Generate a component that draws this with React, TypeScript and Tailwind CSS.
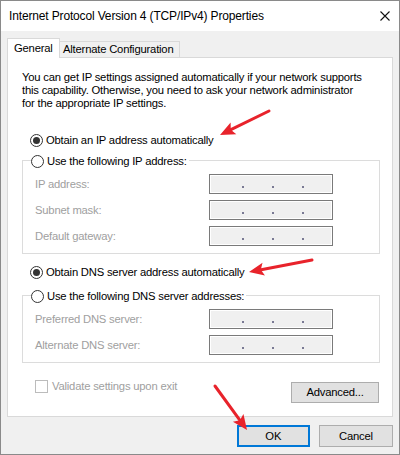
import React from 'react';

const font = { fontFamily: '"Liberation Sans", Arial, sans-serif' };

// little red annotation arrow: tail -> tip
function Arrow({ x1, y1, x2, y2 }: { x1: number; y1: number; x2: number; y2: number }) {
  const dx = x2 - x1;
  const dy = y2 - y1;
  const len = Math.sqrt(dx * dx + dy * dy);
  const ux = dx / len;
  const uy = dy / len;
  const headLen = 15;
  const headW = 6.5;
  const bx = x2 - ux * headLen;
  const by = y2 - uy * headLen;
  const pts = `${x2},${y2} ${bx - uy * headW},${by + ux * headW} ${bx + ux * 3},${by + uy * 3} ${bx + uy * headW},${by - ux * headW}`;
  return (
    <g>
      <line x1={x1} y1={y1} x2={bx + ux * 4} y2={by + uy * 4} stroke="#e8232b" strokeWidth={3} strokeLinecap="round" />
      <polygon points={pts} fill="#e8232b" />
    </g>
  );
}

function Radio({ checked, label }: { checked?: boolean; label: string }) {
  return (
    <div className="flex items-center gap-[3px] bg-white pr-[2px] w-fit">
      <span className="flex items-center justify-center w-[13px] h-[13px] rounded-full border border-[#333] bg-white">
        {checked && <span className="w-[7px] h-[7px] rounded-full bg-[#333]" />}
      </span>
      <span className="text-[11.25px] tracking-[-0.2px] leading-[13px] text-black whitespace-nowrap">{label}</span>
    </div>
  );
}

function IpBox() {
  return (
    <div className="w-[124px] h-[20px] border border-[#7a7a7a] bg-[#f0f0f0] shadow-[inset_0_0_0_1px_#ffffff] relative">
      <span className="absolute left-[32px] top-[11px] w-[2px] h-[2px] bg-[#7a7a94]" />
      <span className="absolute left-[62px] top-[11px] w-[2px] h-[2px] bg-[#7a7a94]" />
      <span className="absolute left-[92px] top-[11px] w-[2px] h-[2px] bg-[#7a7a94]" />
    </div>
  );
}

function FieldRow({ label }: { label: string }) {
  return (
    <div className="flex items-center justify-between h-[20px]">
      <span className="text-[11.25px] tracking-[-0.2px] text-[#a0a0a0]">{label}</span>
      <IpBox />
    </div>
  );
}

function Group({ legend, rows }: { legend: string; rows: string[] }) {
  return (
    <div className="ml-[14px] mr-[12px] border border-[#dcdcdc] px-[12px] pb-[7px]">
      <div className="-mt-[6px] -ml-[4px] mb-[6px]">
        <Radio label={legend} />
      </div>
      <div className="flex flex-col gap-[6px] pr-[34px]">
        {rows.map((r) => (
          <FieldRow key={r} label={r} />
        ))}
      </div>
    </div>
  );
}

export default function App() {
  return (
    <div className="w-[400px] h-[455px] relative bg-[#f0f0f0] border border-[#8a8a8a] flex flex-col overflow-hidden" style={font}>
      {/* Title bar */}
      <div className="h-[30px] bg-white flex items-center justify-between pl-[8px] pr-[9px] shrink-0">
        <span className="text-[12px] tracking-[-0.15px] text-black">Internet Protocol Version 4 (TCP/IPv4) Properties</span>
        <svg width="10" height="10" viewBox="0 0 10 10">
          <path d="M0.5 0.5 L9.5 9.5 M9.5 0.5 L0.5 9.5" stroke="#111" strokeWidth="1.1" />
        </svg>
      </div>

      <div className="flex flex-col px-[6px] pt-[7px]">
        {/* Tabs */}
        <div className="flex items-end h-[20px] relative z-10">
          <div className="h-[20px] w-[53px] bg-white border border-[#d9d9d9] border-b-0 flex items-center pl-[6px] text-[11.25px] tracking-[-0.2px] text-black">
            General
          </div>
          <div className="h-[17px] w-[120px] bg-[#f0f0f0] border border-[#d9d9d9] border-l-0 flex items-center pl-[3px] text-[11.25px] tracking-[-0.2px] text-black whitespace-nowrap">
            Alternate Configuration
          </div>
        </div>

        {/* Panel */}
        <div className="h-[360px] -mt-[1px] bg-white border border-[#d9d9d9] flex flex-col pt-[13px]">
          <p className="px-[14px] text-[11.25px] tracking-[-0.2px] leading-[13px] text-black whitespace-nowrap">
            You can get IP settings assigned automatically if your network supports
            <br />
            this capability. Otherwise, you need to ask your network administrator
            <br />
            for the appropriate IP settings.
          </p>

          <div className="ml-[22px] mt-[24px]">
            <Radio checked label="Obtain an IP address automatically" />
          </div>
          <div className="mt-[13px]">
            <Group legend="Use the following IP address:" rows={['IP address:', 'Subnet mask:', 'Default gateway:']} />
          </div>

          <div className="ml-[22px] mt-[12px]">
            <Radio checked label="Obtain DNS server address automatically" />
          </div>
          <div className="mt-[16px]">
            <Group legend="Use the following DNS server addresses:" rows={['Preferred DNS server:', 'Alternate DNS server:']} />
          </div>

          <div className="flex items-start justify-between pl-[27px] pr-[13px] mt-[19px]">
            <div className="flex items-center gap-[4px] -mt-[2px]">
              <span className="w-[13px] h-[13px] border border-[#bcbcbc] bg-white" />
              <span className="text-[11.25px] tracking-[-0.2px] leading-[13px] text-[#a0a0a0]">Validate settings upon exit</span>
            </div>
            <button className="w-[88px] h-[21px] bg-[#e1e1e1] border border-[#adadad] text-[11.25px] tracking-[-0.2px] text-black">
              Advanced...
            </button>
          </div>
        </div>

        {/* Bottom buttons */}
        <div className="flex justify-end gap-[9px] mt-[8px]">
          <button className="w-[73px] h-[22px] bg-[#e1e1e1] border-2 border-[#0078d7] text-[11.25px] text-black">OK</button>
          <button className="w-[74px] h-[22px] bg-[#e1e1e1] border border-[#adadad] text-[11.25px] tracking-[-0.2px] text-black">Cancel</button>
        </div>
      </div>

      {/* annotation arrows */}
      <svg className="absolute left-0 top-0 pointer-events-none" width="400" height="455">
        <Arrow x1={268} y1={110} x2={219} y2={134} />
        <Arrow x1={311} y1={259} x2={248} y2={271} />
        <Arrow x1={214} y1={385} x2={246} y2={429} />
      </svg>
    </div>
  );
}
